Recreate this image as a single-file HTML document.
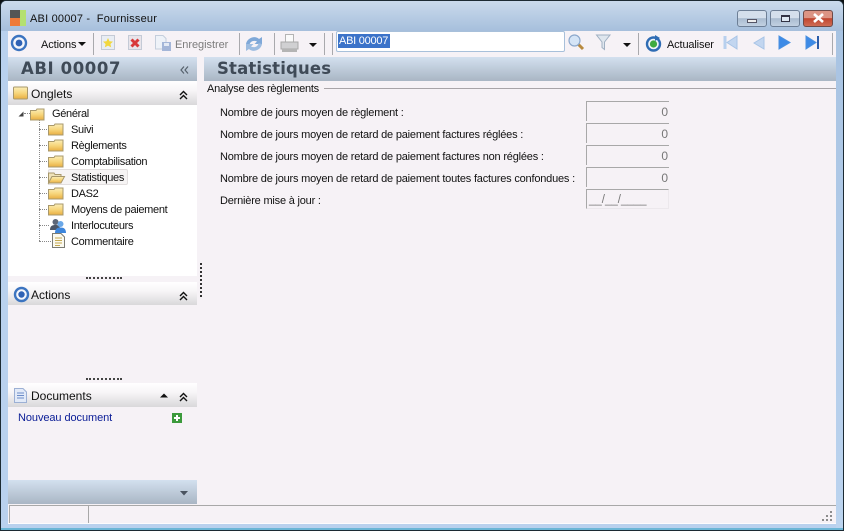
<!DOCTYPE html>
<html><head><meta charset="utf-8">
<style>
html,body{margin:0;padding:0;width:844px;height:531px;overflow:hidden;background:#0b0f12}
*{box-sizing:border-box}
#w{position:absolute;left:0;top:0;width:844px;height:531px;overflow:hidden;background:#b9d1ee;border:1px solid #1c2a33;border-radius:6px 6px 0 0;font-family:"Liberation Sans",sans-serif;font-size:11px;letter-spacing:-.25px;color:#111}
.a{position:absolute}
.t{position:absolute;white-space:nowrap;line-height:14px}
.tr{letter-spacing:-.32px}
.lb{letter-spacing:-.2px}
svg{position:absolute;overflow:visible}
.sep{position:absolute;top:32px;width:1px;height:22px;background:#a9a9ad}
.hd{position:absolute;background:linear-gradient(#d3e0ef,#a9b6c4);height:24px}
.h1{position:absolute;white-space:nowrap;font-family:"DejaVu Sans",sans-serif;font-weight:bold;font-size:16.5px;line-height:22px;color:#3f4a57}
.sec{position:absolute;left:7px;width:189px;height:24px;background:linear-gradient(#fff 0,#f7f5f7 40%,#d9d8da 100%)}
.st{position:absolute;white-space:nowrap;line-height:14px;font-size:12px;letter-spacing:0}
.fld{position:absolute;left:585px;width:83px;height:20px;border-top:1px solid #a8a8a8;border-left:1px solid #a8a8a8;background:#f6f2f6;text-align:right;padding-right:1px;line-height:20px;color:#777;font-size:12px;letter-spacing:0}
.dot{position:absolute;border-top:1px dotted #888;height:0}
.dotv{position:absolute;border-left:1px dotted #888;width:0}
.fo{fill:url(#fg);stroke:#a8986c}
.wb{position:absolute;top:9px;width:30px;height:17px;border:1px solid #6d7f96;border-radius:3px;background:linear-gradient(#d4dfec 45%,#a9bbd0 50%,#c2d1e2)}
</style></head><body>
<div id="w">
<svg width="0" height="0" style="left:0;top:0"><defs><linearGradient id="fg" x1="0" y1="0" x2="0" y2="1"><stop offset="0" stop-color="#fbeeb8"/><stop offset=".5" stop-color="#f7d67c"/><stop offset="1" stop-color="#e8ae42"/></linearGradient></defs></svg>
<div class="a" style="left:0;top:0;width:842px;height:30px;background:linear-gradient(#cadaec,#a6bfdc)"></div>
<div class="a" style="left:0;top:30px;width:7px;height:500px;background:#b9d1ee"></div>
<div class="a" style="left:835px;top:30px;width:7px;height:500px;background:linear-gradient(#a8c3e2,#bcd4ef)"></div>
<div class="a" style="left:0;top:527px;width:842px;height:2px;background:#6bb6d6"></div>
<div class="a" style="left:9px;top:9px;width:10px;height:8px;background:#555"></div>
<div class="a" style="left:9px;top:17px;width:10px;height:8px;background:#ee7a3a"></div>
<div class="a" style="left:19px;top:9px;width:6px;height:16px;background:#b4e070"></div>
<div class="t" style="left:29px;top:11px;font-size:11px;color:#111;letter-spacing:.2px">ABI 00007 -&nbsp; Fournisseur</div>

<div class="wb" style="left:736px"></div>
<div class="a" style="left:746px;top:18px;width:10px;height:4px;background:#eee;border:1px solid #556"></div>
<div class="wb" style="left:769px"></div>
<div class="a" style="left:780px;top:14px;width:9px;height:7px;border:1px solid #334;border-top-width:2px;background:#dfe8f2"></div>
<div class="wb" style="left:802px;border-color:#6e4a48;background:linear-gradient(#dc9484 45%,#c0452f 50%,#cf6c54)"></div>
<svg style="left:812px;top:12px" width="11" height="10"><path d="M1 1L10 9M10 1L1 9" stroke="#fff" stroke-width="2.6"/></svg>

<div class="a" style="left:7px;top:30px;width:828px;height:26px;background:#f6f2f6"></div>
<svg style="left:9px;top:33px" width="18" height="18"><circle cx="9" cy="9" r="7" fill="#f4f6fb" stroke="#3c74c0" stroke-width="2.4"/><circle cx="9" cy="9" r="3.4" fill="#2f62b5"/></svg>
<div class="t" style="left:40px;top:37px;letter-spacing:-.1px">Actions</div>
<svg style="left:77px;top:41px" width="8" height="5"><path d="M0 0H8L4 4Z" fill="#111"/></svg>
<div class="sep" style="left:92px"></div>
<svg style="left:100px;top:34px" width="14" height="15"><rect x=".5" y=".5" width="13" height="14" fill="#e8edf4" stroke="#c4cad6"/><path d="M7 3L8.5 6.2L12 6.6L9.4 9L10.2 12.4L7 10.6L3.8 12.4L4.6 9L2 6.6L5.5 6.2Z" fill="#f2d73e"/></svg>
<svg style="left:127px;top:34px" width="14" height="15"><rect x=".5" y=".5" width="13" height="14" fill="#e8e4ea" stroke="#c4cad6"/><path d="M3.500 4.500L10.500 11.500M10.500 4.500L3.500 11.500" stroke="#d8383a" stroke-width="3"/></svg>
<svg style="left:154px;top:34px" width="17" height="17"><path d="M.5.5H8L11 3.5V14H.5Z" fill="#eef2f8" stroke="#c4cedc"/><rect x="7" y="7" width="9" height="9" fill="#a4b6d8"/><rect x="9" y="8" width="5" height="3" fill="#e4eaf4"/></svg>
<div class="t" style="left:174px;top:37px;color:#7c7c7c;letter-spacing:-.05px">Enregistrer</div>
<div class="sep" style="left:238px"></div>
<svg style="left:244px;top:34px" width="18" height="18"><path d="M1 9C2 3 10 0 14 4L17 2V9H9.500L12 6.500C9 5 5 6 4.500 10Z" fill="#7fa8d8"/><path d="M17 9C16 15 8 18 4 14L1 16V9H8.500L6 11.500C9 13 13 12 13.500 8Z" fill="#9dbce0"/></svg>
<div class="sep" style="left:273px"></div>
<svg style="left:279px;top:33px" width="19" height="19"><path d="M5.500.5H13.500V8H5.500Z" fill="#fafafa" stroke="#b4b4b4"/><path d="M1 8H18V15H1Z" fill="#d0d0d2" stroke="#a8a8a8"/><rect x="2" y="15" width="15" height="3" fill="#b4b4b4"/></svg>
<svg style="left:308px;top:42px" width="8" height="5"><path d="M0 0H8L4 4Z" fill="#111"/></svg>
<div class="sep" style="left:323px"></div>
<div class="sep" style="left:331px"></div>
<div class="a" style="left:335px;top:30px;width:229px;height:21px;background:#fff;border:1px solid #a8c0da;border-radius:2px"></div>
<div class="t" style="left:337px;top:33px;width:52px;height:14px;background:#3b73c9;color:#fff;padding-left:1px">ABI 00007</div>
<svg style="left:567px;top:33px" width="17" height="17"><path d="M9 9L15 15" stroke="#b88a3e" stroke-width="3"/><circle cx="6.500" cy="6.500" r="5.500" fill="#d4e4f6" stroke="#8ca8cc" stroke-width="1.200"/></svg>
<svg style="left:595px;top:33px" width="15" height="16"><path d="M.5 1H14L8.500 8V15.500L6 13.500V8Z" fill="#dfe6ee" stroke="#a0b0c2"/></svg>
<svg style="left:622px;top:42px" width="8" height="5"><path d="M0 0H8L4 4Z" fill="#111"/></svg>
<div class="sep" style="left:637px"></div>
<svg style="left:644px;top:34px" width="17" height="17"><circle cx="8.500" cy="9" r="6.500" fill="#f0f4f8" stroke="#2f6cb4" stroke-width="2.400"/><circle cx="8.500" cy="9" r="3.600" fill="#3faa3f"/><path d="M10 0L15 3L10 6Z" fill="#2f6cb4"/></svg>
<div class="t" style="left:666px;top:37px;letter-spacing:-.15px">Actualiser</div>
<svg style="left:722px;top:34px" width="15" height="15"><rect x=".5" y="1" width="3" height="13" fill="#b8d0ee"/><path d="M14 1V14L4 7.500Z" fill="#c2d6f0" stroke="#a8c4e6"/></svg>
<svg style="left:751px;top:35px" width="13" height="14"><path d="M12 1V13L2 7Z" fill="#c2d6f0" stroke="#a8c4e6"/></svg>
<svg style="left:777px;top:34px" width="13" height="15"><path d="M1 1V14L12 7.500Z" fill="#3d8ae6" stroke="#4a90e0"/></svg>
<svg style="left:804px;top:34px" width="15" height="15"><path d="M1 1V14L11 7.500Z" fill="#3d8ae6" stroke="#4a90e0"/><rect x="12" y="1" width="2" height="13" fill="#2c5ca8"/></svg>
<div class="sep" style="left:831px"></div>

<div class="a" style="left:7px;top:56px;width:828px;height:466px;background:#f6f2f6"></div>
<div class="hd" style="left:7px;top:56px;width:189px"></div>
<div class="hd" style="left:203px;top:56px;width:632px"></div>
<div class="h1" style="left:20px;top:57px;letter-spacing:.6px">ABI 00007</div>
<div class="h1" style="left:216px;top:57px;letter-spacing:.15px">Statistiques</div>
<svg style="left:179px;top:65px" width="9" height="8"><path d="M4 0.500L1 4L4 7.500M8 0.500L5 4L8 7.500" fill="none" stroke="#56616c" stroke-width="1.200"/></svg>

<div class="sec" style="left:7px;top:80px"></div>
<div class="a" style="left:7px;top:104px;width:189px;height:171px;background:#fff"></div>
<svg style="left:12px;top:85px" width="16" height="14"><rect x=".5" y="1" width="14" height="12" rx="1" class="fo"/></svg>
<div class="st" style="left:30px;top:86px">Onglets</div>
<svg style="left:178px;top:90px" width="9" height="9"><path d="M1 4L4.500 .5L8 4M1 8L4.500 4.500L8 8" fill="none" stroke="#111" stroke-width="1.400"/></svg>

<svg style="left:17px;top:110px" width="6" height="6"><path d="M5.500 .5V5.500H.5Z" fill="#444"/></svg>
<div class="dot" style="left:23px;top:112px;width:6px"></div>
<div class="dotv" style="left:38px;top:119px;height:121px"></div>
<div class="dot" style="left:38px;top:128px;width:10px"></div>
<div class="dot" style="left:38px;top:144px;width:10px"></div>
<div class="dot" style="left:38px;top:160px;width:10px"></div>
<div class="dot" style="left:38px;top:176px;width:10px"></div>
<div class="dot" style="left:38px;top:192px;width:10px"></div>
<div class="dot" style="left:38px;top:208px;width:10px"></div>
<div class="dot" style="left:38px;top:224px;width:10px"></div>
<div class="dot" style="left:38px;top:240px;width:12px"></div>

<div class="a" style="left:47px;top:168px;width:80px;height:16px;background:#f6f4f4;border:1px solid #e2dede;border-radius:2px"></div>

<svg style="left:29px;top:107px" width="17" height="13"><path d="M.5 2.500H6L7 1H14V12H.5Z" class="fo"/></svg>
<div class="t tr" style="left:51px;top:106px">Général</div>
<svg style="left:47px;top:122px" width="17" height="13"><path d="M.5 2.500H6L7 1H15V12H.5Z" class="fo"/></svg>
<div class="t tr" style="left:70px;top:122px">Suivi</div>
<svg style="left:47px;top:138px" width="17" height="13"><path d="M.5 2.500H6L7 1H15V12H.5Z" class="fo"/></svg>
<div class="t tr" style="left:70px;top:138px">Règlements</div>
<svg style="left:47px;top:154px" width="17" height="13"><path d="M.5 2.500H6L7 1H15V12H.5Z" class="fo"/></svg>
<div class="t tr" style="left:70px;top:154px">Comptabilisation</div>
<svg style="left:47px;top:170px" width="17" height="13"><path d="M.5 12V2H6L7 3.500H13V6H4Z" fill="#efe2b8" stroke="#a8986c"/><path d="M.5 12L4 5.500H16.500L13 12Z" class="fo"/></svg>
<div class="t tr" style="left:70px;top:170px">Statistiques</div>
<svg style="left:47px;top:186px" width="17" height="13"><path d="M.5 2.500H6L7 1H15V12H.5Z" class="fo"/></svg>
<div class="t tr" style="left:70px;top:186px">DAS2</div>
<svg style="left:47px;top:202px" width="17" height="13"><path d="M.5 2.500H6L7 1H15V12H.5Z" class="fo"/></svg>
<div class="t tr" style="left:70px;top:202px">Moyens de paiement</div>
<svg style="left:49px;top:217px" width="16" height="15"><circle cx="5.500" cy="4" r="3" fill="#5c6678"/><path d="M0 12C0 8 2 7 5.500 7S10 8 10 12Z" fill="#4c5668"/><circle cx="10.500" cy="6" r="3" fill="#6aa8e8"/><path d="M5 15C5 11 7 9.500 10.500 9.500S16 11 16 15Z" fill="#3d86dc"/></svg>
<div class="t tr" style="left:70px;top:218px">Interlocuteurs</div>
<svg style="left:51px;top:232px" width="13" height="15"><path d="M.5.5H9L12.500 4V14.500H.5Z" fill="#fbfaf0" stroke="#7c7c74"/><path d="M3 5H10M3 7.500H10M3 10H10M3 12.500H8" stroke="#c4a850"/></svg>
<div class="t tr" style="left:70px;top:234px">Commentaire</div>

<div class="a" style="left:85px;top:276px;width:36px;height:2px;border-top:2px dotted #444"></div>
<div class="dotv" style="left:199px;top:262px;height:34px;border-left:2px dotted #333"></div>
<div class="sec" style="left:7px;top:281px;height:23px"></div>
<svg style="left:12px;top:285px" width="17" height="17"><circle cx="8.500" cy="8.500" r="6.500" fill="#f4f6fb" stroke="#3c74c0" stroke-width="2.400"/><circle cx="8.500" cy="8.500" r="3.200" fill="#2f62b5"/></svg>
<div class="st" style="left:30px;top:287px">Actions</div>
<svg style="left:178px;top:291px" width="9" height="9"><path d="M1 4L4.500 .5L8 4M1 8L4.500 4.500L8 8" fill="none" stroke="#111" stroke-width="1.400"/></svg>

<div class="a" style="left:85px;top:377px;width:36px;height:2px;border-top:2px dotted #444"></div>
<div class="sec" style="left:7px;top:382px"></div>
<svg style="left:13px;top:387px" width="13" height="15"><path d="M.5.5H9L12.500 4V14.500H.5Z" fill="#e2eaf8" stroke="#9cb0d4"/><path d="M3 5H10M3 7.500H10M3 10H10" stroke="#6c8cc8"/></svg>
<div class="st" style="left:30px;top:388px">Documents</div>
<svg style="left:159px;top:392px" width="8" height="5"><path d="M0 4.500H8L4 .5Z" fill="#111"/></svg>
<svg style="left:178px;top:392px" width="9" height="9"><path d="M1 4L4.500 .5L8 4M1 8L4.500 4.500L8 8" fill="none" stroke="#111" stroke-width="1.400"/></svg>
<div class="t" style="left:17px;top:410px;color:#0a1c96;letter-spacing:-.08px">Nouveau document</div>
<div class="a" style="left:171px;top:412px;width:10px;height:10px;background:#3c9a3c"></div>
<div class="a" style="left:173px;top:416px;width:6px;height:2px;background:#fff"></div>
<div class="a" style="left:175px;top:414px;width:2px;height:6px;background:#fff"></div>

<div class="hd" style="left:7px;top:479px;width:189px;height:24px"></div>
<svg style="left:179px;top:490px" width="8" height="5"><path d="M0 0H8L4 4.500Z" fill="#4a5460"/></svg>

<div class="t" style="left:206px;top:81px">Analyse des règlements</div>
<div class="a" style="left:323px;top:87px;width:512px;height:1px;background:#a8a4a8"></div>
<div class="t lb" style="left:219px;top:105px">Nombre de jours moyen de règlement :</div>
<div class="t lb" style="left:219px;top:127px">Nombre de jours moyen de retard de paiement factures réglées :</div>
<div class="t lb" style="left:219px;top:149px">Nombre de jours moyen de retard de paiement factures non réglées :</div>
<div class="t lb" style="left:219px;top:171px">Nombre de jours moyen de retard de paiement toutes factures confondues :</div>
<div class="t lb" style="left:219px;top:193px">Dernière mise à jour :</div>
<div class="fld" style="top:100px">0</div>
<div class="fld" style="top:122px">0</div>
<div class="fld" style="top:144px">0</div>
<div class="fld" style="top:166px">0</div>
<div class="fld" style="top:188px;text-align:left;padding-left:2px;font-size:11.5px;border-right:1px solid #ece8ec;border-bottom:1px solid #ece8ec">__/__/____</div>

<div class="a" style="left:8px;top:504px;width:827px;height:1px;background:#a8a8a8"></div>
<div class="a" style="left:8px;top:505px;width:1px;height:17px;background:#a8a8a8"></div>
<div class="a" style="left:87px;top:505px;width:1px;height:17px;background:#a8a8a8"></div>
<div class="a" style="left:7px;top:522px;width:828px;height:1px;background:#fdfcfd"></div>
<svg style="left:820px;top:509px" width="12" height="12"><g fill="#8c8c8c"><rect x="9" y="1" width="2" height="2"/><rect x="5" y="5" width="2" height="2"/><rect x="9" y="5" width="2" height="2"/><rect x="1" y="9" width="2" height="2"/><rect x="5" y="9" width="2" height="2"/><rect x="9" y="9" width="2" height="2"/></g></svg>
</div>
</body></html>
